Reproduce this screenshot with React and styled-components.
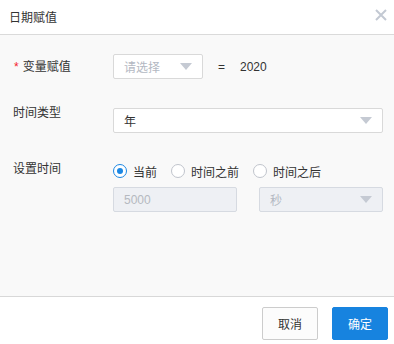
import React, { useState } from 'react';
import styled, { createGlobalStyle } from 'styled-components';

const GlobalStyle = createGlobalStyle`
  html, body {
    margin: 0;
    padding: 0;
    background: #ffffff;
  }
  body {
    font-family: "Liberation Sans", "Noto Sans CJK SC", sans-serif;
    font-size: 12px;
    color: #333333;
  }
`;

const RADIOS = ['当前', '时间之前', '时间之后'];

function App() {
  const [mode, setMode] = useState(0);

  return (
    <>
      <GlobalStyle />
      <Dialog>
        <Header>
          <Title>日期赋值</Title>
          <Close aria-label="close">
            <svg width="12" height="12" viewBox="0 0 12 12">
              <path d="M1 1 L11 11 M11 1 L1 11" stroke="#c3c9d3" strokeWidth="2" fill="none" />
            </svg>
          </Close>
        </Header>

        <Body>
          <Row $align="center">
            <Label>
              <Star>*</Star>变量赋值
            </Label>
            <Select $width="90px">
              <SelectText $placeholder>请选择</SelectText>
              <Arrow />
            </Select>
            <Equal>=</Equal>
            <Value>2020</Value>
          </Row>

          <Row $top="26px">
            <Label>时间类型</Label>
            <Select $grow $offset="3px">
              <SelectText>年</SelectText>
              <Arrow />
            </Select>
          </Row>

          <Row $top="28px">
            <Label>设置时间</Label>
            <Column>
              <RadioGroup>
                {RADIOS.map((r, i) => (
                  <RadioItem key={r} onClick={() => setMode(i)}>
                    <RadioDot $checked={mode === i} />
                    <span>{r}</span>
                  </RadioItem>
                ))}
              </RadioGroup>
              <Pair>
                <Input disabled value="5000" readOnly />
                <Select $disabled>
                  <SelectText $placeholder>秒</SelectText>
                  <Arrow />
                </Select>
              </Pair>
            </Column>
          </Row>
        </Body>

        <Footer>
          <Button>取消</Button>
          <Button $primary>确定</Button>
        </Footer>
      </Dialog>
    </>
  );
}
export default App;

const Dialog = styled.div`
  width: 394px;
  height: 344px;
  display: flex;
  flex-direction: column;
  background: #ffffff;
`;

const Header = styled.div`
  height: 33px;
  border-bottom: 1px solid #dadada;
  display: flex;
  align-items: center;
  justify-content: space-between;
  padding: 0 7px 1px 9px;
  box-sizing: content-box;
`;

const Title = styled.div`
  font-size: 12px;
  color: #333333;
`;

const Close = styled.div`
  width: 12px;
  height: 12px;
  display: flex;
  margin-top: -3px;
`;

const Body = styled.div`
  height: 242px;
  background: #f9f9f9;
  padding: 19px 11px 0 13px;
  border-bottom: 1px solid #d8d8d8;
`;

const Row = styled.div`
  display: flex;
  align-items: ${p => (p.$align === 'center' ? 'center' : 'flex-start')};
  margin-top: ${p => p.$top || '0'};
`;

const Label = styled.div`
  width: 100px;
  flex-shrink: 0;
  line-height: 16px;
  font-size: 12px;
  color: #333333;
`;

const Star = styled.span`
  color: #f5222d;
  margin-right: 4px;
  margin-left: 1px;
`;

const Select = styled.div`
  box-sizing: border-box;
  height: 25px;
  width: ${p => p.$width || 'auto'};
  flex: ${p => (p.$grow ? '1' : p.$width ? 'none' : '1')};
  margin-top: ${p => p.$offset || '0'};
  border: 1px solid ${p => (p.$disabled ? '#d6dae1' : '#d9d9d9')};
  background: ${p => (p.$disabled ? '#eef0f4' : '#ffffff')};
  border-radius: 2px;
  display: flex;
  align-items: center;
  justify-content: space-between;
  padding: 0 10px 0 10px;
`;

const SelectText = styled.span`
  font-size: 12px;
  color: ${p => (p.$placeholder ? '#b3b8c2' : '#333333')};
`;

const Arrow = styled.span`
  width: 0;
  height: 0;
  border-left: 6px solid transparent;
  border-right: 6px solid transparent;
  border-top: 7px solid #c5cad3;
`;

const Equal = styled.span`
  margin-left: 15px;
  color: #333333;
`;

const Value = styled.span`
  margin-left: 15px;
  color: #333333;
`;

const Column = styled.div`
  flex: 1;
  display: flex;
  flex-direction: column;
`;

const RadioGroup = styled.div`
  display: flex;
  align-items: center;
  height: 20px;
`;

const RadioItem = styled.label`
  display: flex;
  align-items: center;
  gap: 6px;
  margin-right: 14px;
  cursor: pointer;
  color: #333333;
`;

const RadioDot = styled.span`
  box-sizing: border-box;
  width: 14px;
  height: 14px;
  border-radius: 50%;
  border: 1px solid ${p => (p.$checked ? '#1b87e3' : '#c0c4cc')};
  background: #ffffff;
  display: flex;
  align-items: center;
  justify-content: center;

  &::after {
    content: '';
    width: 6px;
    height: 6px;
    border-radius: 50%;
    background: ${p => (p.$checked ? '#1b87e3' : 'transparent')};
  }
`;

const Pair = styled.div`
  display: flex;
  gap: 22px;
  margin-top: 6px;
`;

const Input = styled.input`
  box-sizing: border-box;
  flex: 1;
  width: 0;
  height: 25px;
  border: 1px solid #d6dae1;
  background: #eef0f4;
  border-radius: 2px;
  padding: 0 10px;
  font-family: inherit;
  font-size: 12px;
  color: #b5b9c0;
  outline: none;
`;

const Footer = styled.div`
  flex: 1;
  display: flex;
  justify-content: flex-end;
  align-items: flex-start;
  gap: 14px;
  padding: 10px 6px 0 0;
  background: #ffffff;
`;

const Button = styled.button`
  box-sizing: border-box;
  width: 56px;
  height: 33px;
  border-radius: 2px;
  font-family: inherit;
  font-size: 12px;
  cursor: pointer;
  border: 1px solid ${p => (p.$primary ? '#1783df' : '#cccccc')};
  background: ${p => (p.$primary ? '#1783df' : '#fcfcfc')};
  color: ${p => (p.$primary ? '#ffffff' : '#333333')};
`;
